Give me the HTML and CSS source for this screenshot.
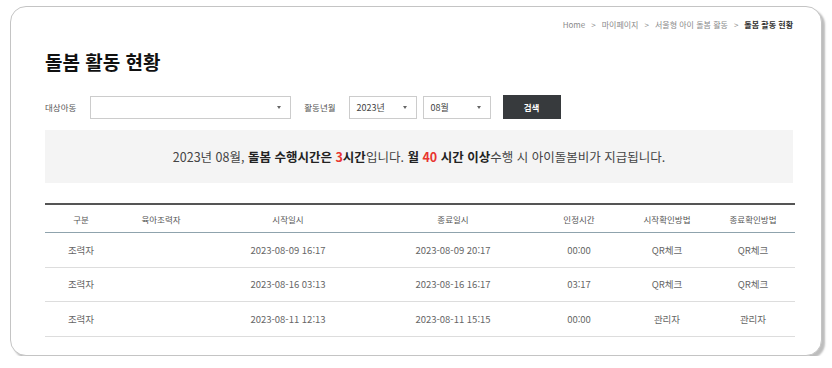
FILE: index.html
```html
<!DOCTYPE html>
<html lang="ko">
  <head>
    <meta charset="UTF-8" />
    <meta name="viewport" content="width=device-width, initial-scale=1.0" />
    <title>돌봄 활동 현황</title>
    <link rel="stylesheet" href="styles.css">
  </head>
  <body>
    <div class="card">
      <div class="breadcrumb">
        <span>Home</span>
        <span class="sep">&gt;</span>
        <span>마이페이지</span>
        <span class="sep">&gt;</span>
        <span>서울형 아이 돌봄 활동</span>
        <span class="sep">&gt;</span>
        <span class="current">돌봄 활동 현황</span>
      </div>

      <h2 class="title">돌봄 활동 현황</h2>

      <form class="filters">
        <label class="filter-label">대상아동</label>
        <div class="select select-child">
          <span></span>
          <span class="caret"></span>
        </div>

        <label class="filter-label">활동년월</label>
        <div class="select select-small">
          <span>2023년</span>
          <span class="caret"></span>
        </div>
        <div class="select select-small">
          <span>08월</span>
          <span class="caret"></span>
        </div>

        <button type="button" class="btn-search">검색</button>
      </form>

      <p class="notice">2023년 08월, <b>돌봄 수행시간은 <em>3</em>시간</b>입니다. <b>월 <em>40</em> 시간 이상</b>수행 시 아이돌봄비가 지급됩니다.</p>

      <table class="list">
        <colgroup>
          <col style="width: 72px" />
          <col style="width: 88px" />
          <col style="width: 166px" />
          <col style="width: 164px" />
          <col style="width: 88px" />
          <col style="width: 88px" />
          <col style="width: 84px" />
        </colgroup>
        <thead>
          <tr>
            <th>구분</th>
            <th>육아조력자</th>
            <th>시작일시</th>
            <th>종료일시</th>
            <th>인정시간</th>
            <th>시작확인방법</th>
            <th>종료확인방법</th>
          </tr>
        </thead>
        <tbody>
          <tr>
            <td>조력자</td>
            <td></td>
            <td>2023-08-09 16:17</td>
            <td>2023-08-09 20:17</td>
            <td>00:00</td>
            <td>QR체크</td>
            <td>QR체크</td>
          </tr>
          <tr>
            <td>조력자</td>
            <td></td>
            <td>2023-08-16 03:13</td>
            <td>2023-08-16 16:17</td>
            <td>03:17</td>
            <td>QR체크</td>
            <td>QR체크</td>
          </tr>
          <tr>
            <td>조력자</td>
            <td></td>
            <td>2023-08-11 12:13</td>
            <td>2023-08-11 15:15</td>
            <td>00:00</td>
            <td>관리자</td>
            <td>관리자</td>
          </tr>
        </tbody>
      </table>
    </div>
  </body>
</html>
```

FILE: styles.css
```css
body {
  margin: 0;
  background: #fff;
  font-family: "Noto Sans CJK KR", "Noto Sans", sans-serif;
  color: #444;
}

.card {
  box-sizing: border-box;
  width: 812px;
  height: 350px;
  margin: 6px 0 0 10px;
  padding: 11px 28px 0 34px;
  border: 1px solid #c4c4c4;
  border-radius: 16px;
  box-shadow: 3px 3px 2px #bdbdbd;
  background: #fff;
}

.breadcrumb {
  display: flex;
  justify-content: flex-end;
  gap: 6px;
  font-size: 8px;
  line-height: 14px;
  color: #8a8a8a;
}

.breadcrumb .current {
  color: #333;
  font-weight: bold;
}

.title {
  margin: 17px 0 0;
  font-size: 19px;
  line-height: 26px;
  font-weight: bold;
  color: #111;
}

.filters {
  display: flex;
  align-items: center;
  margin-top: 20px;
  height: 24px;
}

.filter-label {
  font-size: 8.5px;
  color: #555;
  margin-right: 13px;
}

.select {
  box-sizing: border-box;
  display: flex;
  align-items: center;
  justify-content: space-between;
  height: 23px;
  padding: 0 9px 0 7px;
  border: 1px solid #ccc;
  background: #fff;
  font-size: 9px;
  color: #444;
}

.select-child {
  width: 201px;
  margin-left: 1px;
  margin-right: 13px;
}

.select-small {
  width: 68px;
  margin-right: 6px;
}

.caret {
  width: 0;
  height: 0;
  border-left: 2.5px solid transparent;
  border-right: 2.5px solid transparent;
  border-top: 3px solid #666;
}

.btn-search {
  width: 58px;
  height: 24px;
  margin-left: 6px;
  border: none;
  background: #373a3d;
  color: #fff;
  font-family: inherit;
  font-size: 8.5px;
  font-weight: bold;
}

.notice {
  margin: 11px 0 0;
  height: 53px;
  line-height: 53px;
  text-align: center;
  background: #f4f4f4;
  font-size: 12.5px;
  color: #444;
}

.notice b {
  color: #222;
}

.notice em {
  font-style: normal;
  color: #e8352f;
}

.list {
  width: 750px;
  margin-top: 20px;
  border-collapse: collapse;
  table-layout: fixed;
  border-top: 2px solid #555;
}

.list th {
  height: 27px;
  padding: 0;
  font-size: 8.5px;
  font-weight: normal;
  color: #555;
  border-bottom: 1px solid #8fa3ad;
}

.list td {
  height: 33.5px;
  padding: 0;
  text-align: center;
  font-size: 9.5px;
  color: #666;
  border-bottom: 1px solid #ddd;
}
```
